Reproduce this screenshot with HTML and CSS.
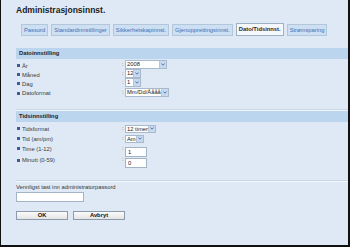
FILE: index.html
```html
<!DOCTYPE html>
<html lang="no">
<head>
	<meta charset="UTF-8">
	<title>Administrasjonsinnst.</title>
	<link rel="stylesheet" href="styles.css">
</head>
<body>
	<div class="page">
		<h1 class="title">Administrasjonsinnst.</h1>

		<ul class="tabs">
			<li>Passord</li>
			<li>Standardinnstillinger</li>
			<li>Sikkerhetskapinnst.</li>
			<li>Gjenopprettingsinnst.</li>
			<li class="cur">Dato/Tidsinnst.</li>
			<li>Strømsparing</li>
		</ul>

		<!-- dato -->
		<div class="sect_hd">Datoinnstilling</div>
		<div class="rows rows_date">
			<div class="row">
				<span class="lbl"><b class="dot"></b>År</span><span class="colon">:</span>
				<span class="sel sel_year"><span class="val">2008</span><span class="arr"><svg width="4" height="3" viewBox="0 0 4 3"><path d="M0.4 0.5 L2 2.2 L3.6 0.5" fill="none" stroke="#4a6ca6" stroke-width="0.9"/></svg></span></span>
			</div>
			<div class="row">
				<span class="lbl"><b class="dot"></b>Måned</span><span class="colon">:</span>
				<span class="sel sel_short"><span class="val">12</span><span class="arr"><svg width="4" height="3" viewBox="0 0 4 3"><path d="M0.4 0.5 L2 2.2 L3.6 0.5" fill="none" stroke="#4a6ca6" stroke-width="0.9"/></svg></span></span>
			</div>
			<div class="row">
				<span class="lbl"><b class="dot"></b>Dag</span><span class="colon">:</span>
				<span class="sel sel_short"><span class="val">1</span><span class="arr"><svg width="4" height="3" viewBox="0 0 4 3"><path d="M0.4 0.5 L2 2.2 L3.6 0.5" fill="none" stroke="#4a6ca6" stroke-width="0.9"/></svg></span></span>
			</div>
			<div class="row">
				<span class="lbl"><b class="dot"></b>Datoformat</span><span class="colon">:</span>
				<span class="sel sel_fmt"><span class="val">Mm/Dd/Åååå</span><span class="arr"><svg width="4" height="3" viewBox="0 0 4 3"><path d="M0.4 0.5 L2 2.2 L3.6 0.5" fill="none" stroke="#4a6ca6" stroke-width="0.9"/></svg></span></span>
			</div>
		</div>

		<div class="sep"></div>

		<!-- tid -->
		<div class="sect_hd">Tidsinnstilling</div>
		<div class="rows rows_time">
			<div class="row">
				<span class="lbl"><b class="dot"></b>Tidsformat</span><span class="colon">:</span>
				<span class="sel sel_hr"><span class="val">12 timer</span><span class="arr"><svg width="4" height="3" viewBox="0 0 4 3"><path d="M0.4 0.5 L2 2.2 L3.6 0.5" fill="none" stroke="#4a6ca6" stroke-width="0.9"/></svg></span></span>
			</div>
			<div class="row">
				<span class="lbl"><b class="dot"></b>Tid (am/pm)</span><span class="colon">:</span>
				<span class="sel sel_am"><span class="val">Am</span><span class="arr"><svg width="4" height="3" viewBox="0 0 4 3"><path d="M0.4 0.5 L2 2.2 L3.6 0.5" fill="none" stroke="#4a6ca6" stroke-width="0.9"/></svg></span></span>
			</div>
			<div class="row row_in">
				<span class="lbl"><b class="dot"></b>Time (1-12)</span><span class="colon">:</span>
				<input class="txt" type="text" value="1">
			</div>
			<div class="row row_in">
				<span class="lbl"><b class="dot"></b>Minutt (0-59)</span><span class="colon">:</span>
				<input class="txt" type="text" value="0">
			</div>
		</div>

		<div class="sep sep_end"></div>

		<div class="pw_lbl">Vennligst tast inn administratorpassord</div>
		<input class="pw" type="password">

		<div class="btns">
			<button class="btn">OK</button>
			<button class="btn">Avbryt</button>
		</div>
	</div>
</body>
</html>
```

FILE: styles.css
```css
*{
	margin: 0;
	padding: 0;
}
html{
	background: #dee9f5;
}
body{
	box-sizing: border-box;
	width: 350px;
	height: 247px;
	background: #dee9f5;
	border-left: 1px solid #111;
	border-right: 2px solid #111;
	border-bottom: 2px solid #111;
	font-family: "Liberation Sans", Arial, sans-serif;
	font-size: 5.8px;
	color: #3a3a3a;
	overflow: hidden;
}
.page{
	padding: 5px 0 0 15px;
}
.title{
	font-size: 8.5px;
	line-height: 10px;
	font-weight: bold;
	color: #1c1c1c;
}

/* tabs */
.tabs{
	list-style: none;
	display: flex;
	align-items: flex-end;
	gap: 3px;
	margin: 8px 0 0 5px;
}
.tabs li{
	height: 10px;
	line-height: 10px;
	padding: 0 2px;
	border: 1px solid #b3c6da;
	background: #cddff2;
	color: #3c6fb6;
	white-space: nowrap;
}
.tabs li.cur{
	height: 11px;
	line-height: 11px;
	background: #f4f7fb;
	border-color: #9eb0c4;
	color: #2a2a2a;
	font-weight: bold;
}

/* sections */
.sect_hd{
	margin-top: 12px;
	height: 11px;
	line-height: 11px;
	padding-left: 3px;
	background: #bcd5ee;
	font-weight: bold;
	color: #222;
}
.sep + .sect_hd{
	margin-top: 0;
}
.sep{
	height: 1px;
	margin-top: 12px;
	border-top: 1px solid #c9d6e5;
	background: #f3f7fb;
}
.sep_end{
	margin-top: 13px;
}
.rows_date{
	margin-top: 1px;
}
.rows_time{
	margin-top: 2px;
}
.row{
	display: flex;
	align-items: flex-start;
	height: 9.2px;
}
.rows_time .row{
	height: 10px;
}
.rows_time .row_in{
	height: 11.5px;
}
.lbl{
	display: flex;
	align-items: center;
	box-sizing: border-box;
	width: 106px;
	height: 9px;
	margin-top: 1px;
	padding-left: 1px;
	white-space: nowrap;
}
.rows_time .lbl{
	height: 10px;
	margin-top: 0;
}
.dot{
	width: 3px;
	height: 3px;
	margin-right: 2px;
	background: #3d5d96;
}
.colon{
	width: 3px;
	line-height: 9px;
	color: #555;
}

/* fake selects */
.sel{
	display: flex;
	box-sizing: border-box;
	height: 9px;
	border: 1px solid #a9bacd;
	background: #fff;
}
.rows_time .sel{
	height: 8px;
	margin-top: 1px;
}
.sel .val{
	flex: 1;
	padding-left: 1px;
	line-height: 7px;
	color: #222;
	white-space: nowrap;
}
.rows_time .sel .val{
	line-height: 6px;
}
.sel .arr{
	display: flex;
	flex: none;
	align-items: center;
	justify-content: center;
	width: 6px;
	background: #c6d9ef;
	border-left: 1px solid #b4c7dc;
}
.sel_year{ width: 42px; }
.sel_fmt{ width: 44px; }
.sel_short{ width: 16px; }
.sel_hr{ width: 31px; }
.sel_am{ width: 19px; }

.txt{
	box-sizing: border-box;
	width: 22px;
	height: 10px;
	margin-top: 3px;
	padding-left: 2px;
	border: 1px solid #a3b4c7;
	background: #fff;
	font-family: "Liberation Sans", Arial, sans-serif;
	font-size: 5.8px;
	color: #222;
	outline: none;
}

/* password + buttons */
.pw_lbl{
	margin-top: 1px;
	line-height: 8px;
	color: #333;
}
.pw{
	display: block;
	box-sizing: border-box;
	width: 68px;
	height: 10px;
	margin-top: 1px;
	border: 1px solid #a3b4c7;
	background: #fff;
	outline: none;
}
.btns{
	display: flex;
	gap: 5px;
	margin-top: 9px;
}
.btn{
	box-sizing: border-box;
	width: 52px;
	height: 9px;
	border: 1px solid #8c9aab;
	background: linear-gradient(#fbfbfb, #e4e4e4);
	font-family: "Liberation Sans", Arial, sans-serif;
	font-size: 5.8px;
	font-weight: bold;
	line-height: 7px;
	color: #111;
}
```
